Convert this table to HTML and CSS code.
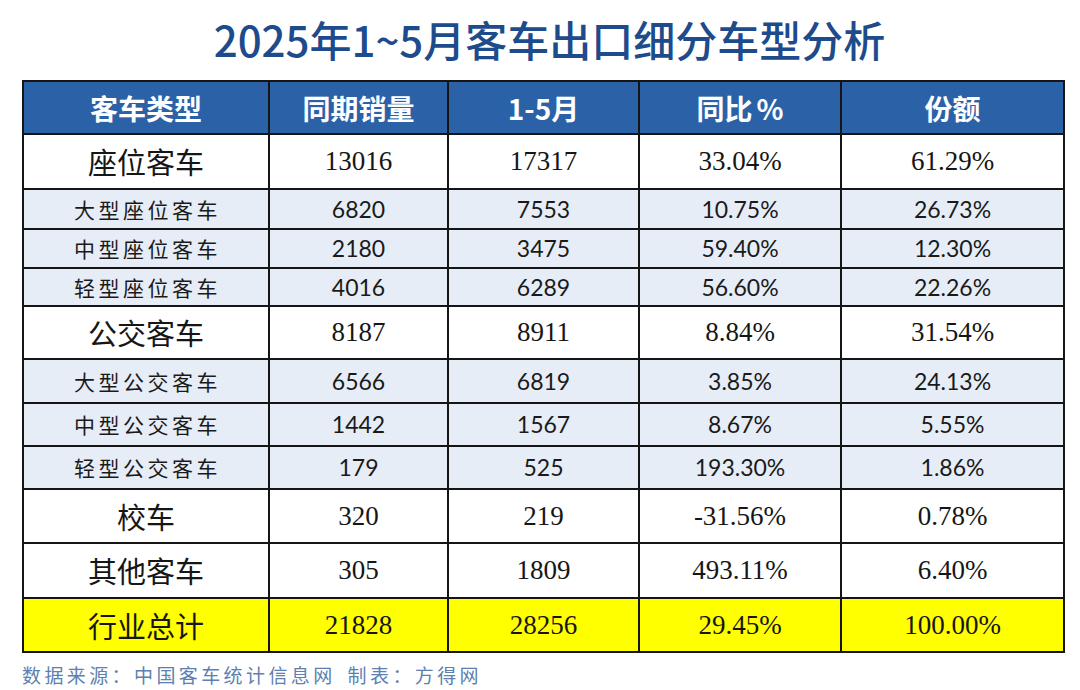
FILE: index.html
```html
<!DOCTYPE html>
<html lang="zh-CN">
<head>
<meta charset="utf-8">
<title>2025年1~5月客车出口细分车型分析</title>
<link rel="stylesheet" href="styles.css">
</head>
<body>
<div class="page">
  <h1 class="title">2025年1~5月客车出口细分车型分析</h1>
  <table class="data">
    <colgroup>
      <col class="c1"><col class="c2"><col class="c3"><col class="c4"><col class="c5">
    </colgroup>
    <thead>
      <tr class="r-head"><th>客车类型</th><th>同期销量</th><th>1-5月</th><th>同比<span class="pct">%</span></th><th>份额</th></tr>
    </thead>
    <tbody>
      <tr class="main r55"><td class="label">座位客车</td><td>13016</td><td>17317</td><td>33.04%</td><td>61.29%</td></tr>
      <tr class="sub r40"><td class="label">大型座位客车</td><td>6820</td><td>7553</td><td>10.75%</td><td>26.73%</td></tr>
      <tr class="sub r39"><td class="label">中型座位客车</td><td>2180</td><td>3475</td><td>59.40%</td><td>12.30%</td></tr>
      <tr class="sub r38"><td class="label">轻型座位客车</td><td>4016</td><td>6289</td><td>56.60%</td><td>22.26%</td></tr>
      <tr class="main r53"><td class="label">公交客车</td><td>8187</td><td>8911</td><td>8.84%</td><td>31.54%</td></tr>
      <tr class="sub r44"><td class="label">大型公交客车</td><td>6566</td><td>6819</td><td>3.85%</td><td>24.13%</td></tr>
      <tr class="sub r43"><td class="label">中型公交客车</td><td>1442</td><td>1567</td><td>8.67%</td><td>5.55%</td></tr>
      <tr class="sub r43"><td class="label">轻型公交客车</td><td>179</td><td>525</td><td>193.30%</td><td>1.86%</td></tr>
      <tr class="main r54"><td class="label">校车</td><td>320</td><td>219</td><td>-31.56%</td><td>0.78%</td></tr>
      <tr class="main r55"><td class="label">其他客车</td><td>305</td><td>1809</td><td>493.11%</td><td>6.40%</td></tr>
      <tr class="main total r54"><td class="label">行业总计</td><td>21828</td><td>28256</td><td>29.45%</td><td>100.00%</td></tr>
    </tbody>
  </table>
  <p class="source">数据来源：中国客车统计信息网<span class="gap"></span>制表：方得网</p>
</div>
</body>
</html>
```

FILE: styles.css
```css
html, body {
  margin: 0;
  padding: 0;
  background: #ffffff;
}

.page {
  width: 1080px;
  height: 690px;
  padding: 0 0 0 22px;
  box-sizing: border-box;
  font-family: "Noto Sans CJK SC", "Noto Sans", sans-serif;
}

.title {
  margin: 0;
  width: 1041px;
  height: 80px;
  padding-left: 14px;
  box-sizing: border-box;
  line-height: 78px;
  text-align: center;
  font-size: 42px;
  font-weight: 500;
  color: #1d4b8b;
}

.data {
  border-collapse: collapse;
  table-layout: fixed;
  width: 1041px;
}

.c1 { width: 246px; }
.c2 { width: 179px; }
.c3 { width: 191px; }
.c4 { width: 202px; }
.c5 { width: 223px; }

.data th,
.data td {
  border: 2px solid #151515;
  padding: 0;
  text-align: center;
  vertical-align: middle;
}

.r-head { height: 53px; }
.r38 { height: 38px; }
.r39 { height: 39px; }
.r40 { height: 40px; }
.r43 { height: 43px; }
.r44 { height: 44px; }
.r53 { height: 53px; }
.r54 { height: 54px; }
.r55 { height: 55px; }

.data th {
  background: #2b62a7;
  color: #ffffff;
  font-family: "Noto Sans CJK SC", "Noto Sans", sans-serif;
  font-weight: 700;
  font-size: 28px;
  line-height: 1;
}

.pct {
  margin-left: 4px;
}

.main td {
  background: #ffffff;
  color: #161616;
  font-family: "Liberation Serif", "Times New Roman", serif;
  font-size: 27px;
  line-height: 1;
}

.main td.label {
  font-family: "Noto Sans CJK SC", sans-serif;
  font-size: 29px;
  font-weight: 400;
}

.sub td {
  background: #e6edf7;
  color: #1a1a1a;
  font-family: Lato, "Open Sans", sans-serif;
  font-size: 23px;
  line-height: 1;
}

.sub td.label {
  font-family: "Noto Sans CJK SC", sans-serif;
  font-size: 21px;
  letter-spacing: 3.5px;
  padding-left: 3px;
}

.total td {
  background: #ffff00;
}

.source {
  margin: 9px 0 0 0;
  font-family: "Noto Sans CJK SC", sans-serif;
  font-size: 19px;
  letter-spacing: 3.4px;
  color: #5d7fb1;
  line-height: 26px;
}

.gap {
  display: inline-block;
  width: 12px;
}
```
